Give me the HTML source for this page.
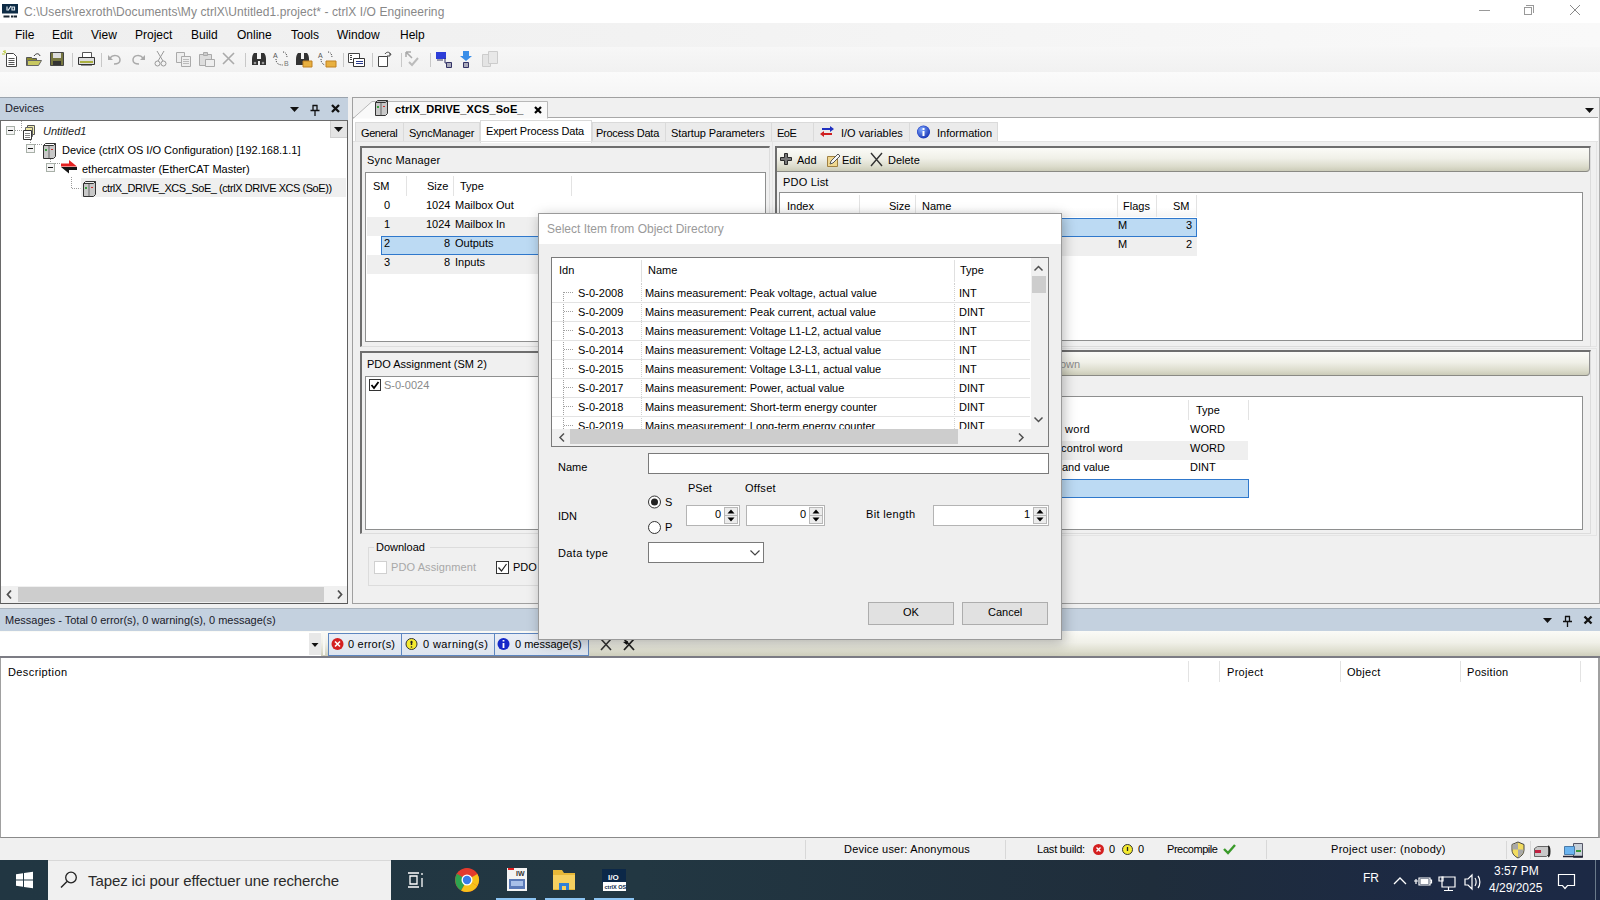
<!DOCTYPE html>
<html><head><meta charset="utf-8">
<style>
*{box-sizing:border-box;margin:0;padding:0}
html,body{width:1600px;height:900px;overflow:hidden;background:#f0f0f0;font:11px "Liberation Sans",sans-serif;color:#000}
.a{position:absolute}
.t{position:absolute;white-space:pre;line-height:13px}
.hdr{background:#c4d1df}
.grad{background:linear-gradient(#fbfbf7,#f0f0e8 45%,#dcdccc 80%,#cbcbb8)}
.box{background:#fff;border:1px solid #8e8f8f}
.vl{position:absolute;width:1px;background:#e3e3e3}
.hl{position:absolute;height:1px;background:#e6e6e6}
</style></head><body>

<!-- TITLE BAR -->
<div class="a" style="left:0;top:0;width:1600px;height:23px;background:#fff"></div>
<svg class="a" style="left:0;top:0" width="22" height="22"><path d="M2 4h16v9.5h-16z" fill="#0d2b45"/><path d="M7 6.5v4M8 10.5l3-4.5M12 7h2.5v3h-2.5z" stroke="#dfe8ee" stroke-width="1.2" fill="none"/><path d="M3.5 15.5h6v2h-6zM11 15.5h2.5v2h-2.5zM14 15.5h3v2h-3z" fill="#1a2530"/></svg>
<div class="t" style="left:24px;top:6px;font-size:12px;color:#888;letter-spacing:0.08px">C:\Users\rexroth\Documents\My ctrlX\Untitled1.project* - ctrlX I/O Engineering</div>

<!-- MENU -->
<div class="a" style="left:0;top:23px;width:1600px;height:24px;background:linear-gradient(90deg,#efefef,#f2f2f2 40%,#f7f7f7 80%,#f9f9f9)"></div>
<div class="a" style="left:0;top:47px;width:1600px;height:25px;background:linear-gradient(#f7f7f7,#f1f1f1)"></div>
<div class="a" style="left:0;top:72px;width:1600px;height:25px;background:linear-gradient(#fbfbfb,#f5f5f5)"></div>


<!-- MENU ITEMS -->
<div class="t" style="left:15px;top:28px;font-size:12px;line-height:14px">File</div>
<div class="t" style="left:52px;top:28px;font-size:12px;line-height:14px">Edit</div>
<div class="t" style="left:91px;top:28px;font-size:12px;line-height:14px">View</div>
<div class="t" style="left:135px;top:28px;font-size:12px;line-height:14px">Project</div>
<div class="t" style="left:191px;top:28px;font-size:12px;line-height:14px">Build</div>
<div class="t" style="left:237px;top:28px;font-size:12px;line-height:14px">Online</div>
<div class="t" style="left:291px;top:28px;font-size:12px;line-height:14px">Tools</div>
<div class="t" style="left:337px;top:28px;font-size:12px;line-height:14px">Window</div>
<div class="t" style="left:400px;top:28px;font-size:12px;line-height:14px">Help</div>
<!-- window controls -->
<div class="a" style="left:1479px;top:10px;width:11px;height:1px;background:#999"></div>
<div class="a" style="left:1524px;top:7px;width:8px;height:8px;border:1px solid #999"></div>
<div class="a" style="left:1526px;top:5px;width:8px;height:8px;border-top:1px solid #999;border-right:1px solid #999"></div>
<svg class="a" style="left:1569px;top:4px" width="12" height="12"><path d="M1 1L11 11M11 1L1 11" stroke="#8a8a8a" stroke-width="1"/></svg>
<!-- TOOLBAR ICONS -->
<svg class="a" style="left:0;top:48px" width="510" height="22">
 <g fill="none" stroke-width="1">
 <!-- new -->
 <path d="M6.5 5.5h7l3 3v10h-10z" fill="#fff" stroke="#444"/><path d="M8.5 10.5h6M8.5 12.5h6M8.5 14.5h6M8.5 16.5h6" stroke="#555"/><path d="M3 3l3 2M5 2v3M2 6h3" stroke="#b8c830"/>
 <!-- open -->
 <path d="M26.5 9.5h5l1 1h4v7h-10z" fill="#8a8a30" stroke="#555"/><path d="M27.5 12.5h14l-3 5h-11z" fill="#c8c860" stroke="#666"/><path d="M34 8c2-3 5-3 6 0" stroke="#333"/>
 <!-- save -->
 <path d="M50.5 4.5h13v13h-13z" fill="#777740" stroke="#444"/><path d="M53 5h8v5h-8z" fill="#ddd"/><path d="M53 13h8v4h-8z" fill="#333"/>
 <path d="M72.5 5v14" stroke="#c8c8c8"/>
 <!-- print -->
 <path d="M82.5 4.5h9v5h-9z" fill="#fff" stroke="#555"/><path d="M78.5 9.5h16v7h-16z" fill="#ddd" stroke="#333"/><path d="M80 14h13" stroke="#aab040" stroke-width="2"/><path d="M81 17h11" stroke="#333"/>
 <path d="M101.5 5v14" stroke="#c8c8c8"/>
 <!-- undo redo -->
 <path d="M110 10c3-4 10-3 10 2c0 3-3 4-6 4" stroke="#aaa" stroke-width="1.5"/><path d="M108 7v5h5z" fill="#aaa"/>
 <path d="M143 10c-3-4-10-3-10 2c0 3 3 4 6 4" stroke="#aaa" stroke-width="1.5"/><path d="M145 7v5h-5z" fill="#aaa"/>
 <!-- cut -->
 <path d="M157 3l6 10M164 3l-6 10" stroke="#999"/><circle cx="157.5" cy="15.5" r="2.5" stroke="#999"/><circle cx="163.5" cy="15.5" r="2.5" stroke="#999"/>
 <!-- copy -->
 <path d="M176.5 4.5h8v10h-8z" fill="#eee" stroke="#aaa"/><path d="M181.5 8.5h9v10h-9z" fill="#eee" stroke="#aaa"/><path d="M183 11.5h6M183 13.5h6M183 15.5h6" stroke="#bbb"/>
 <!-- paste -->
 <path d="M199.5 6.5h12v11h-12z" fill="#ddd" stroke="#aaa"/><path d="M203.5 4.5h4v3h-4z" fill="#ccc" stroke="#aaa"/><path d="M205.5 11.5h9v7h-9z" fill="#eee" stroke="#aaa"/>
 <!-- delete -->
 <path d="M223 5l11 11M234 5l-11 11" stroke="#aaa" stroke-width="1.6"/>
 <path d="M245.5 5v14" stroke="#c8c8c8"/>
 <!-- binoculars -->
 <path d="M252 11c0-3 1-5 2-6h3v6h4v-6h3c1 1 2 3 2 6v6h-6v-4h-2v4h-6z" fill="#333"/><circle cx="255" cy="15" r="1.3" fill="#999"/><circle cx="263" cy="15" r="1.3" fill="#999"/>
 <!-- replace -->
 <text x="273" y="10" font-size="7" fill="#555" font-family="Liberation Sans">A</text><text x="284" y="18" font-size="7" fill="#777" font-family="Liberation Sans">B</text><path d="M276 11c0 4 2 6 7 6M283 4c3 0 4 3 4 6" stroke="#444" stroke-dasharray="1 1"/>
 <!-- find in -->
 <path d="M296 11c0-3 1-5 2-6h3v6h3v-6h3c1 1 2 3 2 6v6h-13z" fill="#333"/><path d="M303 13h9v6h-9z" fill="#e8b040" stroke="#c08020"/>
 <!-- replace in -->
 <text x="318" y="10" font-size="7" fill="#555" font-family="Liberation Sans">A</text><path d="M321 11c0 3 1 5 4 6M328 4c3 0 4 3 4 6" stroke="#444" stroke-dasharray="1 1"/><path d="M326 13h10v6h-10z" fill="#e8b040" stroke="#c08020"/>
 <path d="M343.5 5v14" stroke="#c8c8c8"/>
 <!-- window list -->
 <path d="M348.5 5.5h11v9h-11z" fill="#fff" stroke="#444"/><path d="M353.5 10.5h11v8h-11z" fill="#fff" stroke="#333"/><path d="M356 13.5h7M356 15.5h7" stroke="#2a3a8a"/><path d="M350 7.5h2M350 9.5h2M350 11.5h2" stroke="#444"/>
 <path d="M372.5 5v14" stroke="#c8c8c8"/>
 <!-- page -->
 <path d="M378.5 8.5h9v10h-9z" fill="#fff" stroke="#444"/><path d="M385 6c2-3 5-2 6 1" stroke="#444"/><path d="M390 5v3h-3" stroke="#444"/>
 <path d="M401.5 5v14" stroke="#c8c8c8"/>
 <!-- check gray -->
 <path d="M409 14l3 3l6-7" stroke="#bbb" stroke-width="2"/><path d="M406 4l6 6M406 4h5M406 4v5" stroke="#aaa" stroke-width="1.5"/>
 <path d="M430.5 5v14" stroke="#c8c8c8"/>
 <!-- login blue -->
 <path d="M436 4h10v7h-10z" fill="#2d3ed8"/><path d="M437 11h6v2h-6z" fill="#99a"/><path d="M445 10v5h3" stroke="#336"/><path d="M446.5 14.5h5v5h-5z" fill="#aab" stroke="#336"/>
 <!-- download blue -->
 <path d="M463 3h6v5h3l-6 5l-6-5h3z" fill="#3a8ee8"/><path d="M463.5 14.5h5v5h-5z" fill="#aab" stroke="#336"/>
 <!-- gray copy -->
 <path d="M482.5 6.5h8v12h-8z" fill="#e4e4e4" stroke="#ccc"/><path d="M488.5 3.5h9v12h-9z" fill="#e8e8e8" stroke="#ccc"/>
 </g>
</svg>

<!-- DEVICES PANEL -->
<div class="a hdr" style="left:0;top:97px;width:348px;height:24px;border-top:1px solid #9aa3ad;border-bottom:1px solid #6a6a6a"></div>
<div class="t" style="left:5px;top:102px;color:#1a1a2a">Devices</div>
<div class="a" style="left:0;top:121px;width:348px;height:483px;background:#fff;border-left:1px solid #6a6a6a;border-right:1px solid #606060;border-bottom:1px solid #5a5a5a"></div>


<!-- devices header icons -->
<svg class="a" style="left:285px;top:101px" width="60" height="16">
 <path d="M5 6h9l-4.5 5z" fill="#111"/>
 <path d="M27.5 4.5h5M28 4v5M32 4v5M25.5 9.5h9M30 10v5" stroke="#111" fill="none" stroke-width="1.3"/>
 <path d="M47 4l7 7M54 4l-7 7" stroke="#111" stroke-width="2.3"/>
</svg>
<!-- tree dropdown -->
<div class="a" style="left:330px;top:121px;width:17px;height:17px;background:#e4e4e4;border-left:1px solid #d0d0d0;border-bottom:1px solid #d0d0d0"></div>
<svg class="a" style="left:330px;top:121px" width="17" height="17"><path d="M4 6h9l-4.5 5z" fill="#111"/></svg>
<!-- tree -->
<div class="a" style="left:81px;top:178px;width:265px;height:19px;background:#efefef"></div>
<svg class="a" style="left:0;top:121px" width="120" height="80">
 <g stroke="#9a9a9a" stroke-dasharray="1 1" fill="none">
  <path d="M15 9.5h8M21.5 0v8M30.5 13v11M35 23.5h7M50.5 32v10M55 42.5h5M71.5 56v11.5h9"/>
 </g>
 <g fill="#f4f4f4" stroke="#a8b0a8"><rect x="6.5" y="5.5" width="8" height="8"/><rect x="26.5" y="23.5" width="8" height="8"/><rect x="46.5" y="42.5" width="8" height="8"/></g>
 <path d="M8 9.5h5M28 27.5h5M48 46.5h5" stroke="#111"/>
 <!-- project icon -->
 <path d="M27.5 4.5h7v9h-7z" fill="#f0ecb0" stroke="#555"/><path d="M25.5 6.5h7v9h-7z" fill="#eee8a0" stroke="#666"/><path d="M23.5 9.5h8v9h-8z" fill="#fff" stroke="#333"/><path d="M25 12.5h5M25 14.5h5M25 16.5h5" stroke="#888"/>
 <!-- device icon -->
 <g><path d="M43.5 24.5h10l2-2v13l-2 2h-10z" fill="#c8c8c8" stroke="#333"/><path d="M49 25v12" stroke="#666"/><path d="M45 28h2v2h-2z" fill="#3aa040"/><path d="M51 28h2v1h-2z" fill="#d03030"/><path d="M43.5 24.5l2-2h10" fill="none" stroke="#333"/></g>
 <!-- ethercat arrows -->
 <path d="M61 42.5h8v-3.5l8 6.5h-16z" fill="#e52222"/><path d="M77 46h-16l8 6.5v-3.5h8z" fill="#151515"/>
 <!-- drive icon -->
 <g><path d="M83.5 62.5h10l2-2v13l-2 2h-10z" fill="#c8c8c8" stroke="#333"/><path d="M89 63v12" stroke="#666"/><path d="M85 66h2v2h-2z" fill="#3aa040"/><path d="M91 66h2v1h-2z" fill="#d03030"/><path d="M83.5 62.5l2-2h10" fill="none" stroke="#333"/></g>
</svg>
<div class="t" style="left:43px;top:125px;font-style:italic;color:#222">Untitled1</div>
<div class="t" style="left:62px;top:144px">Device (ctrlX OS I/O Configuration) [192.168.1.1]</div>
<div class="t" style="left:82px;top:163px">ethercatmaster (EtherCAT Master)</div>
<div class="t" style="left:102px;top:182px;letter-spacing:-0.45px">ctrlX_DRIVE_XCS_SoE_ (ctrlX DRIVE XCS (SoE))</div>
<!-- devices h scrollbar -->
<div class="a" style="left:1px;top:586px;width:346px;height:17px;background:#f0f0f0"></div>
<div class="a" style="left:18px;top:587px;width:306px;height:15px;background:#cdcdcd"></div>
<svg class="a" style="left:1px;top:585px" width="346" height="19"><path d="M10 5.5l-3.5 4l3.5 4M337 5.5l3.5 4l-3.5 4" stroke="#505050" stroke-width="1.8" fill="none"/></svg>


<!-- EDITOR PANEL -->
<div class="a" style="left:352px;top:97px;width:1248px;height:507px;background:#f0f0f0;border:1px solid #a0a0a0;border-right:1px solid #b0b0b0"></div>
<div class="a" style="left:353px;top:117px;width:1245px;height:1px;background:#a8a8a8"></div>
<div class="a" style="left:353px;top:118px;width:1245px;height:23px;background:#fff"></div>
<!-- doc tab -->
<svg class="a" style="left:352px;top:98px" width="200" height="21">
 <path d="M1 20.5L20 3.5h175.5v17" fill="#f9f9f9" stroke="#b8b8b8"/>
 <g transform="translate(-60,-58)"><path d="M83.5 62.5h10l2-2v13l-2 2h-10z" fill="#c8c8c8" stroke="#333"/><path d="M89 63v12" stroke="#666"/><path d="M85 66h2v2h-2z" fill="#3aa040"/><path d="M91 66h2v1h-2z" fill="#d03030"/><path d="M83.5 62.5l2-2h10" fill="none" stroke="#333"/></g>
 <path d="M183 9l6 6M189 9l-6 6" stroke="#000" stroke-width="2.2"/>
</svg>
<div class="t" style="left:395px;top:103px;font-weight:bold;letter-spacing:0.1px">ctrlX_DRIVE_XCS_SoE_</div>
<svg class="a" style="left:1582px;top:104px" width="14" height="10"><path d="M3 4h9l-4.5 5z" fill="#111"/></svg>
<!-- sub tabs -->
<div class="a" style="left:355px;top:122px;width:125px;height:19px;background:#ebebeb;border:1px solid #dadada;border-bottom:none"></div>
<div class="a" style="left:403px;top:123px;width:1px;height:18px;background:#dadada"></div>
<div class="a" style="left:592px;top:122px;width:406px;height:19px;background:#ebebeb;border:1px solid #dadada;border-bottom:none"></div>
<div class="a" style="left:665px;top:123px;width:1px;height:18px;background:#dadada"></div>
<div class="a" style="left:771px;top:123px;width:1px;height:18px;background:#dadada"></div>
<div class="a" style="left:813px;top:123px;width:1px;height:18px;background:#dadada"></div>
<div class="a" style="left:909px;top:123px;width:1px;height:18px;background:#dadada"></div>
<div class="a" style="left:480px;top:120px;width:112px;height:23px;background:#fff;border:1px solid #dadada;border-bottom:none"></div>
<div class="t" style="left:361px;top:127px;letter-spacing:-0.4px">General</div>
<div class="t" style="left:409px;top:127px;letter-spacing:-0.25px">SyncManager</div>
<div class="t" style="left:486px;top:125px;letter-spacing:-0.15px">Expert Process Data</div>
<div class="t" style="left:596px;top:127px;letter-spacing:-0.25px">Process Data</div>
<div class="t" style="left:671px;top:127px;letter-spacing:-0.1px">Startup Parameters</div>
<div class="t" style="left:777px;top:127px;letter-spacing:-0.5px">EoE</div>
<div class="t" style="left:841px;top:127px">I/O variables</div>
<div class="t" style="left:937px;top:127px">Information</div>
<svg class="a" style="left:818px;top:124px" width="120" height="16">
 <path d="M4 4h8v-2l4 3l-4 3v-2h-8z" fill="#2030c0"/><path d="M14 9h-8v-2l-4 3l4 3v-2h8z" fill="#d02020"/>
 <circle cx="105.5" cy="8" r="6.5" fill="#1e3ec8"/><circle cx="105.5" cy="8" r="6" fill="url(#ig)"/>
 <defs><radialGradient id="ig" cx=".35" cy=".3" r=".8"><stop offset="0" stop-color="#7fa8ff"/><stop offset="1" stop-color="#1530b0"/></radialGradient></defs>
 <path d="M104.5 7h2v5h-2z M104.5 4h2v2h-2z" fill="#fff"/>
</svg>
<div class="a" style="left:353px;top:141px;width:1245px;height:1px;background:#e2e2e2"></div>

<!-- SYNC MANAGER group -->
<div class="a" style="left:360px;top:146px;width:410px;height:201px;border:1px solid #e8e8e8;border-top:2px solid #6e6e6e;border-left:2px solid #6e6e6e;border-right:1px solid #ddd;border-bottom:1px solid #ddd"></div>
<div class="t" style="left:367px;top:154px;letter-spacing:0.2px">Sync Manager</div>
<div class="a box" style="left:365px;top:172px;width:401px;height:170px"></div>
<div class="vl" style="left:406px;top:176px;height:20px"></div><div class="vl" style="left:453px;top:176px;height:20px"></div><div class="vl" style="left:571px;top:176px;height:20px"></div>
<div class="t" style="left:373px;top:180px">SM</div><div class="t" style="left:427px;top:180px">Size</div><div class="t" style="left:460px;top:180px">Type</div>
<div class="a" style="left:367px;top:217px;width:397px;height:19px;background:#efefef"></div>
<div class="a" style="left:367px;top:255px;width:397px;height:19px;background:#efefef"></div>
<div class="a" style="left:381px;top:236px;width:383px;height:19px;background:#bcdaf3;border:1px solid #2f78cc"></div>
<div class="t" style="left:384px;top:199px">0</div><div class="t" style="left:426px;top:199px">1024</div><div class="t" style="left:455px;top:199px">Mailbox Out</div>
<div class="t" style="left:384px;top:218px">1</div><div class="t" style="left:426px;top:218px">1024</div><div class="t" style="left:455px;top:218px">Mailbox In</div>
<div class="t" style="left:384px;top:237px">2</div><div class="t" style="left:444px;top:237px">8</div><div class="t" style="left:455px;top:237px">Outputs</div>
<div class="t" style="left:384px;top:256px">3</div><div class="t" style="left:444px;top:256px">8</div><div class="t" style="left:455px;top:256px">Inputs</div>

<!-- PDO LIST group -->
<div class="a" style="left:772px;top:141px;width:825px;height:206px;border:1px solid #e4e4e4"></div>
<div class="a" style="left:775px;top:146px;width:816px;height:201px;border-top:2px solid #6e6e6e;border-left:2px solid #6e6e6e;border-right:1px solid #dcdcdc;border-bottom:1px solid #dcdcdc"></div>
<div class="a grad" style="left:777px;top:148px;width:813px;height:24px;border-bottom:1px solid #8a8a84;border-right:1px solid #909090;border-radius:0 0 4px 0"></div>
<svg class="a" style="left:778px;top:151px" width="120" height="18">
 <path d="M6.5 2.5h3v4h4v3h-4v4h-3v-4h-4v-3h4z" fill="#777" stroke="#2a2a2a"/>
 <path d="M49.5 5.5h10v10h-10z" fill="#f0d890" stroke="#a08040"/><path d="M52 13l1-3l7-7l2 2l-7 7z" fill="#f8f8f8" stroke="#555"/>
 <path d="M93 2l11 13M104 2l-11 13" stroke="#333" stroke-width="1.4"/>
</svg>
<div class="t" style="left:797px;top:154px">Add</div>
<div class="t" style="left:842px;top:154px">Edit</div>
<div class="t" style="left:888px;top:154px">Delete</div>
<div class="t" style="left:783px;top:176px;letter-spacing:0.2px">PDO List</div>
<div class="a box" style="left:779px;top:192px;width:804px;height:149px"></div>
<div class="a" style="left:780px;top:193px;width:417px;height:24px;background:linear-gradient(#fff,#fff 60%,#f4f4f4)"></div>
<div class="vl" style="left:859px;top:195px;height:22px"></div><div class="vl" style="left:915px;top:195px;height:22px"></div><div class="vl" style="left:1117px;top:195px;height:22px"></div><div class="vl" style="left:1156px;top:195px;height:22px"></div><div class="vl" style="left:1196px;top:195px;height:22px"></div>
<div class="t" style="left:787px;top:200px">Index</div><div class="t" style="left:889px;top:200px">Size</div><div class="t" style="left:922px;top:200px">Name</div><div class="t" style="left:1123px;top:200px">Flags</div><div class="t" style="left:1173px;top:200px">SM</div>
<div class="a" style="left:780px;top:218px;width:417px;height:19px;background:#bcdaf3;border:1px solid #2f78cc"></div>
<div class="a" style="left:780px;top:237px;width:417px;height:19px;background:#efefef"></div>
<div class="t" style="left:1118px;top:219px">M</div><div class="t" style="left:1186px;top:219px">3</div>
<div class="t" style="left:1118px;top:238px">M</div><div class="t" style="left:1186px;top:238px">2</div>

<!-- PDO ASSIGNMENT group -->
<div class="a" style="left:360px;top:351px;width:410px;height:183px;border:1px solid #ddd;border-top:2px solid #6e6e6e;border-left:2px solid #6e6e6e"></div>
<div class="t" style="left:367px;top:358px">PDO Assignment (SM 2)</div>
<div class="a box" style="left:365px;top:376px;width:401px;height:154px"></div>
<div class="a" style="left:369px;top:379px;width:12px;height:12px;background:#fff;border:1px solid #333"></div>
<svg class="a" style="left:369px;top:379px" width="12" height="12"><path d="M2.5 6l2.5 3l4.5-6" stroke="#000" stroke-width="1.8" fill="none"/></svg>
<div class="t" style="left:384px;top:379px;color:#8a8a8a">S-0-0024</div>

<!-- PDO CONTENT group -->
<div class="a" style="left:772px;top:348px;width:825px;height:188px;border:1px solid #e4e4e4"></div>
<div class="a" style="left:775px;top:350px;width:816px;height:184px;border-top:2px solid #6e6e6e;border-left:2px solid #6e6e6e;border-right:1px solid #dcdcdc;border-bottom:1px solid #dcdcdc"></div>
<div class="a grad" style="left:777px;top:352px;width:813px;height:24px;border-bottom:1px solid #8a8a84;border-right:1px solid #909090;border-radius:0 0 4px 0"></div>
<div class="t" style="left:1060px;top:358px;color:#8a8a8a">own</div>
<div class="a box" style="left:779px;top:396px;width:804px;height:134px"></div>
<div class="vl" style="left:1188px;top:400px;height:20px"></div><div class="vl" style="left:1248px;top:400px;height:20px"></div>
<div class="t" style="left:1196px;top:404px">Type</div>
<div class="a" style="left:780px;top:441px;width:468px;height:19px;background:#efefef"></div>
<div class="a" style="left:780px;top:479px;width:469px;height:19px;background:#bcdaf3;border:1px solid #2f78cc"></div>
<div class="t" style="left:1065px;top:423px;letter-spacing:0.3px">word</div><div class="t" style="left:1190px;top:423px">WORD</div>
<div class="t" style="left:1061px;top:442px;letter-spacing:0.15px">control word</div><div class="t" style="left:1190px;top:442px">WORD</div>
<div class="t" style="left:1062px;top:461px">and value</div><div class="t" style="left:1190px;top:461px">DINT</div>

<!-- DOWNLOAD group -->
<div class="a" style="left:368px;top:547px;width:600px;height:39px;border:1px solid #dcdcdc"></div>
<div class="a" style="left:374px;top:541px;width:56px;height:12px;background:#f0f0f0"></div>
<div class="t" style="left:376px;top:541px">Download</div>
<div class="a" style="left:374px;top:561px;width:13px;height:13px;background:#fff;border:1px solid #d0d0d0"></div>
<div class="t" style="left:391px;top:561px;color:#a8a8a8;letter-spacing:0.1px">PDO Assignment</div>
<div class="a" style="left:496px;top:561px;width:13px;height:13px;background:#fff;border:1px solid #333"></div>
<svg class="a" style="left:496px;top:561px" width="13" height="13"><path d="M2.5 6.5l3 3.5l5-7" stroke="#222" stroke-width="1.2" fill="none"/></svg>
<div class="t" style="left:513px;top:561px">PDO Configuration</div>


<!-- MESSAGES -->
<div class="a hdr" style="left:0;top:608px;width:1600px;height:23px;border-top:1px solid #a9b3bd"></div>
<div class="t" style="left:5px;top:614px;color:#1a1a2a">Messages - Total 0 error(s), 0 warning(s), 0 message(s)</div>
<svg class="a" style="left:1535px;top:612px" width="62" height="16">
 <path d="M8 6h9l-4.5 5z" fill="#111"/>
 <path d="M30 4.5h5M30.5 4v5M34.5 4v5M28 9.5h9M32.5 10v5" stroke="#111" fill="none" stroke-width="1.3"/>
 <path d="M49.5 4.5l7 7M56.5 4.5l-7 7" stroke="#111" stroke-width="2.3"/>
</svg>
<div class="a grad" style="left:0;top:631px;width:1600px;height:26px"></div>
<div class="a" style="left:0;top:632px;width:321px;height:24px;background:#fff"></div>
<div class="a" style="left:309px;top:633px;width:12px;height:22px;background:#e8e8e8"></div>
<svg class="a" style="left:309px;top:633px" width="12" height="22"><path d="M2.5 10h7l-3.5 4z" fill="#111"/></svg>
<div class="a" style="left:323px;top:633px;width:2px;height:22px;background:#f8f8f4"></div>
<div class="a" style="left:328px;top:633px;width:261px;height:23px;background:linear-gradient(#e9eef6,#dde4ee);border:1px solid #5d86c0"></div>
<div class="a" style="left:401px;top:633px;width:1px;height:23px;background:#5d86c0"></div>
<div class="a" style="left:494px;top:633px;width:1px;height:23px;background:#5d86c0"></div>
<svg class="a" style="left:328px;top:633px" width="320" height="23">
 <circle cx="9.5" cy="11" r="6" fill="#d42020"/><path d="M7 8.5l5 5M12 8.5l-5 5" stroke="#fff" stroke-width="1.6"/>
 <circle cx="83.5" cy="11" r="5.5" fill="#f4ea30" stroke="#333" stroke-width="1"/><path d="M83.5 8v4" stroke="#222" stroke-width="1.5"/><path d="M82 9.5l1.5-2l1.5 2" fill="#222"/><circle cx="83.5" cy="14" r=".8" fill="#222"/>
 <circle cx="175.5" cy="11" r="6" fill="#1428c8"/><path d="M175.5 10v5M175.5 7v1.6" stroke="#fff" stroke-width="1.8"/>
 <path d="M273 6l10 11M283 6l-10 11" stroke="#333" stroke-width="1.6"/>
 <path d="M296 6l10 11M306 6l-10 11" stroke="#222" stroke-width="1.8"/><path d="M295 9l5-1l-1 4z" fill="#111"/>
</svg>
<div class="t" style="left:348px;top:638px;letter-spacing:0.2px">0 error(s)</div>
<div class="t" style="left:423px;top:638px;letter-spacing:0.4px">0 warning(s)</div>
<div class="t" style="left:515px;top:638px">0 message(s)</div>
<div class="a" style="left:0;top:656px;width:1600px;height:2px;background:#7c7c84"></div>
<div class="a" style="left:0;top:658px;width:1600px;height:180px;background:#fff;border-left:1px solid #a0a0a0;border-right:2px solid #a0a0a0;border-bottom:1px solid #8a8a8a"></div>
<div class="vl" style="left:1188px;top:661px;height:21px"></div><div class="vl" style="left:1219px;top:661px;height:21px"></div><div class="vl" style="left:1340px;top:661px;height:21px"></div><div class="vl" style="left:1460px;top:661px;height:21px"></div><div class="vl" style="left:1580px;top:661px;height:21px"></div>
<div class="t" style="left:8px;top:666px;letter-spacing:0.4px">Description</div>
<div class="t" style="left:1227px;top:666px;letter-spacing:0.3px">Project</div>
<div class="t" style="left:1347px;top:666px;letter-spacing:0.3px">Object</div>
<div class="t" style="left:1467px;top:666px;letter-spacing:0.3px">Position</div>

<!-- STATUS -->
<div class="a" style="left:0;top:838px;width:1600px;height:22px;background:#f0f0f0"></div>
<div class="a" style="left:805px;top:840px;width:1px;height:19px;background:#d8d8d8"></div>
<div class="a" style="left:1005px;top:840px;width:1px;height:19px;background:#d8d8d8"></div>
<div class="a" style="left:1266px;top:840px;width:1px;height:19px;background:#d8d8d8"></div>
<div class="t" style="left:844px;top:843px;letter-spacing:0.2px">Device user: Anonymous</div>
<div class="t" style="left:1037px;top:843px;letter-spacing:-0.2px">Last build:</div>
<div class="t" style="left:1109px;top:843px">0</div>
<div class="t" style="left:1138px;top:843px">0</div>
<div class="t" style="left:1167px;top:843px;letter-spacing:-0.45px">Precompile</div>
<div class="t" style="left:1331px;top:843px;letter-spacing:0.3px">Project user: (nobody)</div>
<svg class="a" style="left:1085px;top:840px" width="520" height="20">
 <circle cx="13.5" cy="9.5" r="5.5" fill="#d42020"/><path d="M11.5 7.5l4 4M15.5 7.5l-4 4" stroke="#fff" stroke-width="1.4"/>
 <circle cx="42.5" cy="9.5" r="5" fill="#f4ea30" stroke="#333"/><path d="M42.5 7v4" stroke="#222" stroke-width="1.3"/>
 <path d="M139 9l4 4l7-8" stroke="#3a9a2a" stroke-width="2.4" fill="none"/>
 <path d="M1506.5 1v18M1530.5 1v18" stroke="#d8d8d8" transform="translate(-1085,0)"/>
 <path d="M433 2l6 2.5v5.5c0 4-3 6.5-6 8c-3-1.5-6-4-6-8v-5.5z" fill="#f2dc60" stroke="#444"/><path d="M433 3v6.5h5.5v0.5c0 3.5-2.5 6-5.5 7.5v-8h-5.5v-5z" fill="#a8a8a8"/>
 <path d="M449.5 8.5l3-2h11v8l-2 2h-12z" fill="#c8c8c8" stroke="#666"/><path d="M450 10h6v3h-6z" fill="#c02040"/><path d="M463 6.5c2 0 2 9 0 10" stroke="#222" stroke-width="2" fill="none"/>
 <path d="M488.5 3.5h9v14h-9z" fill="#c8d0d8" stroke="#556"/><path d="M491 10h5v2h-5z" fill="#3a9a3a"/><path d="M479.5 6.5h10v8h-10z" fill="#6ab4f0" stroke="#4a7aa8"/><path d="M478 16.5h20" stroke="#223" stroke-width="1.5"/>
</svg>

<!-- TASKBAR -->
<div class="a" style="left:0;top:860px;width:1600px;height:40px;background:linear-gradient(90deg,#213642,#223742 40%,#1f2d3b 72%,#1c2944 90%,#1c2945)"></div>
<div class="a" style="left:48px;top:860px;width:343px;height:40px;background:#f0f0f0;border-top:1px solid #d8d8d8"></div>
<div class="t" style="left:88px;top:872px;font-size:15px;line-height:17px;color:#2a2a2a;letter-spacing:-0.1px">Tapez ici pour effectuer une recherche</div>
<svg class="a" style="left:0;top:860px" width="660" height="40">
 <path d="M16 14.2l7-1v6.3h-7zM24 13l9-1.3v7.8h-9zM16 20.5h7v6.3l-7-1zM24 20.5h9v7.8l-9-1.3z" fill="#fff"/>
 <circle cx="71" cy="17.5" r="5.3" fill="none" stroke="#222" stroke-width="1.3"/><path d="M67 21.5l-6 6" stroke="#222" stroke-width="1.5"/>
 <g stroke="#fff" fill="none" stroke-width="1.3"><path d="M408 13h11M408 27h11M410 16h7v8h-7z M422 13v2 M422 18v9"/></g>
 <circle cx="467" cy="20" r="12" fill="#e33b2e"/><path d="M467 20L457 14A12 12 0 0 1 479 20z" fill="#e33b2e"/><path d="M467 20l10.4 6A12 12 0 0 1 461 30.4z" fill="#f7c21a"/><path d="M467 20l-6 10.4A12 12 0 0 1 457 13.8z" fill="#2ea44f"/><path d="M467 20L477.4 14A12 12 0 0 1 477.4 26z" fill="#f7c21a"/><circle cx="467" cy="20" r="5.5" fill="#fff"/><circle cx="467" cy="20" r="4.2" fill="#3a7ce8"/>
 <g transform="translate(0,-4)"><path d="M507 12h20v23h-20z" fill="#f4f4f4"/><path d="M508 12h6v2h-6z" fill="#e02020"/><text x="516" y="20" font-size="7" fill="#333" font-family="Liberation Sans" font-weight="bold">IW</text><path d="M509 23h16v10h-16z" fill="#5a7ab8"/><path d="M511 25h12v5h-12z" fill="#a8c0e8"/></g>
 <g transform="translate(0,-2)"><path d="M553 12h9l2 3h11v17h-22z" fill="#e8b838"/><path d="M553 17h22v14h-22z" fill="#f6d060"/><path d="M559 25h10v7h-10z" fill="#2f7fd8"/><path d="M562 28h4v4h-4z" fill="#f6d060"/></g>
 <g transform="translate(0,-3)"><path d="M602 12h24v14h-24z" fill="#0c2848"/><text x="608" y="23" font-size="8" fill="#fff" font-family="Liberation Sans" font-weight="bold">I/O</text><path d="M603 25h23v9h-23z" fill="#fff"/><text x="604.5" y="32" font-size="5.5" fill="#0c2848" font-family="Liberation Sans" font-weight="bold">ctrlX OS</text></g>
 <path d="M496 38h40v2h-40zM545 38h40v2h-40zM594 38h40v2h-40z" fill="#8cc4f2"/>
</svg>
<div class="t" style="left:1363px;top:871px;font-size:12px;line-height:14px;color:#fff">FR</div>
<div class="t" style="left:1494px;top:864px;font-size:12px;line-height:14px;color:#fff">3:57 PM</div>
<div class="t" style="left:1489px;top:881px;font-size:12px;line-height:14px;color:#fff">4/29/2025</div>
<svg class="a" style="left:1380px;top:860px" width="220" height="40">
 <path d="M14 24l6-6l6 6" stroke="#fff" stroke-width="1.3" fill="none"/>
 <g stroke="#fff" fill="none" stroke-width="1.2"><path d="M39 18h11v7h-11zM50 20h1.5v3h-1.5"/><path d="M36 19v5M34 21h4" /><path d="M41 19.5h7v4h-7z" fill="#fff"/></g>
 <g stroke="#fff" fill="none" stroke-width="1.2"><path d="M62 17h13v10h-13zM68.5 27v3M64 30.5h9"/><path d="M59 17h4v4h-4z"/></g>
 <g stroke="#fff" fill="none" stroke-width="1.2"><path d="M85 19h3l4-4v14l-4-4h-3z"/><path d="M95 18c1.5 2 1.5 6 0 8M98 16c2.5 3 2.5 9 0 12"/></g>
 <g stroke="#fff" fill="none" stroke-width="1.2"><path d="M178.5 14.5h16v11h-7l-2.5 3l-2.5-3h-4z"/></g>
 <path d="M215.5 860v40" stroke="#888"/>
</svg>
<div class="a" style="left:1595px;top:860px;width:1px;height:40px;background:#6a7a8a"></div>

<!-- DIALOG -->
<div class="a" style="left:538px;top:213px;width:524px;height:427px;background:#efefef;border:1px solid #9a9a9a;box-shadow:2px 3px 12px rgba(0,0,0,.28)"></div>
<div class="a" style="left:539px;top:214px;width:522px;height:30px;background:#fff"></div>
<div class="t" style="left:547px;top:222px;font-size:12px;line-height:14px;color:#9a9a9a">Select Item from Object Directory</div>
<!-- list -->
<div class="a box" style="left:551px;top:257px;width:498px;height:190px;border-color:#7a7a7a"></div>
<div class="vl" style="left:641px;top:260px;height:22px;background:#e0e0e0"></div><div class="vl" style="left:954px;top:260px;height:22px;background:#e0e0e0"></div>
<div class="t" style="left:559px;top:264px">Idn</div><div class="t" style="left:648px;top:264px">Name</div><div class="t" style="left:960px;top:264px">Type</div>
<div class="a" style="left:552px;top:283px;width:478px;height:146px;overflow:hidden">
 <div class="a" style="left:89px;top:0;width:1px;height:146px;border-left:1px dotted #d0d0d0"></div>
 <div class="a" style="left:402px;top:0;width:1px;height:146px;border-left:1px dotted #d0d0d0"></div>
 <svg class="a" style="left:0;top:0" width="30" height="146"><g stroke="#a0a0a0" stroke-dasharray="1 1" fill="none"><path d="M11.5 9v140"/><path d="M12 9.5h9"/><path d="M12 28.5h9"/><path d="M12 47.5h9"/><path d="M12 66.5h9"/><path d="M12 85.5h9"/><path d="M12 104.5h9"/><path d="M12 123.5h9"/><path d="M12 142.5h9"/></g></svg>
<div class="t" style="left:26px;top:4px">S-0-2008</div><div class="t" style="letter-spacing:-0.05px;left:93px;top:4px">Mains measurement: Peak voltage, actual value</div><div class="t" style="left:407px;top:4px">INT</div>
<div class="a" style="left:0;top:19px;width:478px;height:1px;background:#e3e3e3"></div>
<div class="t" style="left:26px;top:23px">S-0-2009</div><div class="t" style="letter-spacing:-0.05px;left:93px;top:23px">Mains measurement: Peak current, actual value</div><div class="t" style="left:407px;top:23px">DINT</div>
<div class="a" style="left:0;top:38px;width:478px;height:1px;background:#e3e3e3"></div>
<div class="t" style="left:26px;top:42px">S-0-2013</div><div class="t" style="letter-spacing:-0.05px;left:93px;top:42px">Mains measurement: Voltage L1-L2, actual value</div><div class="t" style="left:407px;top:42px">INT</div>
<div class="a" style="left:0;top:57px;width:478px;height:1px;background:#e3e3e3"></div>
<div class="t" style="left:26px;top:61px">S-0-2014</div><div class="t" style="letter-spacing:-0.05px;left:93px;top:61px">Mains measurement: Voltage L2-L3, actual value</div><div class="t" style="left:407px;top:61px">INT</div>
<div class="a" style="left:0;top:76px;width:478px;height:1px;background:#e3e3e3"></div>
<div class="t" style="left:26px;top:80px">S-0-2015</div><div class="t" style="letter-spacing:-0.05px;left:93px;top:80px">Mains measurement: Voltage L3-L1, actual value</div><div class="t" style="left:407px;top:80px">INT</div>
<div class="a" style="left:0;top:95px;width:478px;height:1px;background:#e3e3e3"></div>
<div class="t" style="left:26px;top:99px">S-0-2017</div><div class="t" style="letter-spacing:-0.05px;left:93px;top:99px">Mains measurement: Power, actual value</div><div class="t" style="left:407px;top:99px">DINT</div>
<div class="a" style="left:0;top:114px;width:478px;height:1px;background:#e3e3e3"></div>
<div class="t" style="left:26px;top:118px">S-0-2018</div><div class="t" style="letter-spacing:-0.05px;left:93px;top:118px">Mains measurement: Short-term energy counter</div><div class="t" style="left:407px;top:118px">DINT</div>
<div class="a" style="left:0;top:133px;width:478px;height:1px;background:#e3e3e3"></div>
<div class="t" style="left:26px;top:137px">S-0-2019</div><div class="t" style="letter-spacing:-0.05px;left:93px;top:137px">Mains measurement: Long-term energy counter</div><div class="t" style="left:407px;top:137px">DINT</div>
<div class="a" style="left:0;top:152px;width:478px;height:1px;background:#e3e3e3"></div>
</div>
<!-- v scroll -->
<div class="a" style="left:1031px;top:258px;width:17px;height:171px;background:#f0f0f0"></div>
<div class="a" style="left:1032px;top:276px;width:14px;height:17px;background:#cdcdcd"></div>
<svg class="a" style="left:1031px;top:258px" width="17" height="171"><path d="M3.5 12.5l4-4l4 4M3.5 159.5l4 4l4-4" stroke="#505050" stroke-width="1.5" fill="none"/></svg>
<!-- h scroll -->
<div class="a" style="left:552px;top:429px;width:496px;height:17px;background:#f0f0f0"></div>
<div class="a" style="left:570px;top:429px;width:388px;height:15px;background:#cdcdcd"></div>
<svg class="a" style="left:552px;top:429px" width="496" height="17"><path d="M12 4.5l-4 4l4 4M467 4.5l4 4l-4 4" stroke="#505050" stroke-width="1.5" fill="none"/></svg>
<!-- form -->
<div class="t" style="left:558px;top:461px">Name</div>
<div class="a" style="left:648px;top:453px;width:401px;height:21px;background:#fff;border:1px solid #7a7a7a"></div>
<div class="t" style="left:688px;top:482px">PSet</div>
<div class="t" style="left:745px;top:482px;letter-spacing:0.3px">Offset</div>
<div class="t" style="left:558px;top:510px">IDN</div>
<svg class="a" style="left:646px;top:494px" width="20" height="44">
 <circle cx="8.5" cy="8" r="6" fill="#fff" stroke="#333"/><circle cx="8.5" cy="8" r="3.5" fill="#222"/>
 <circle cx="8.5" cy="33.5" r="6" fill="#fff" stroke="#333"/>
</svg>
<div class="t" style="left:665px;top:496px">S</div>
<div class="t" style="left:665px;top:521px">P</div>
<div class="a" style="left:686px;top:505px;width:54px;height:21px;background:#fff;border:1px solid #b4b4b4"></div>
<div class="t" style="left:715px;top:508px">0</div>
<div class="a" style="left:746px;top:505px;width:79px;height:21px;background:#fff;border:1px solid #b4b4b4"></div>
<div class="t" style="left:800px;top:508px">0</div>
<div class="t" style="left:866px;top:508px;letter-spacing:0.35px">Bit length</div>
<div class="a" style="left:933px;top:505px;width:116px;height:21px;background:#fff;border:1px solid #b4b4b4"></div>
<div class="t" style="left:1024px;top:508px">1</div>
<svg class="a" style="left:0;top:0" width="1100" height="600">
 <g fill="#ececec" stroke="#b8b8b8"><rect x="724.5" y="507.5" width="13" height="16"/><rect x="809.5" y="507.5" width="13" height="16"/><rect x="1033.5" y="507.5" width="13" height="16"/></g>
 <g stroke="#b8b8b8"><path d="M725 515.5h12M810 515.5h12M1034 515.5h12"/></g>
 <g fill="#000"><path d="M727.5 513.5h7l-3.5-4zM727.5 517.5h7l-3.5 4zM812.5 513.5h7l-3.5-4zM812.5 517.5h7l-3.5 4zM1036.5 513.5h7l-3.5-4zM1036.5 517.5h7l-3.5 4z"/></g>
</svg>
<div class="t" style="left:558px;top:547px;letter-spacing:0.35px">Data type</div>
<div class="a" style="left:648px;top:542px;width:116px;height:21px;background:#fff;border:1px solid #7a7a7a"></div>
<svg class="a" style="left:748px;top:546px" width="14" height="12"><path d="M2.5 4.5l4.5 4.5l4.5-4.5" stroke="#444" stroke-width="1.2" fill="none"/></svg>
<div class="a" style="left:868px;top:602px;width:86px;height:23px;background:#e1e1e1;border:1px solid #adadad"></div>
<div class="a" style="left:962px;top:602px;width:86px;height:23px;background:#e1e1e1;border:1px solid #adadad"></div>
<div class="t" style="left:903px;top:606px">OK</div>
<div class="t" style="left:988px;top:606px">Cancel</div>
</body></html>
